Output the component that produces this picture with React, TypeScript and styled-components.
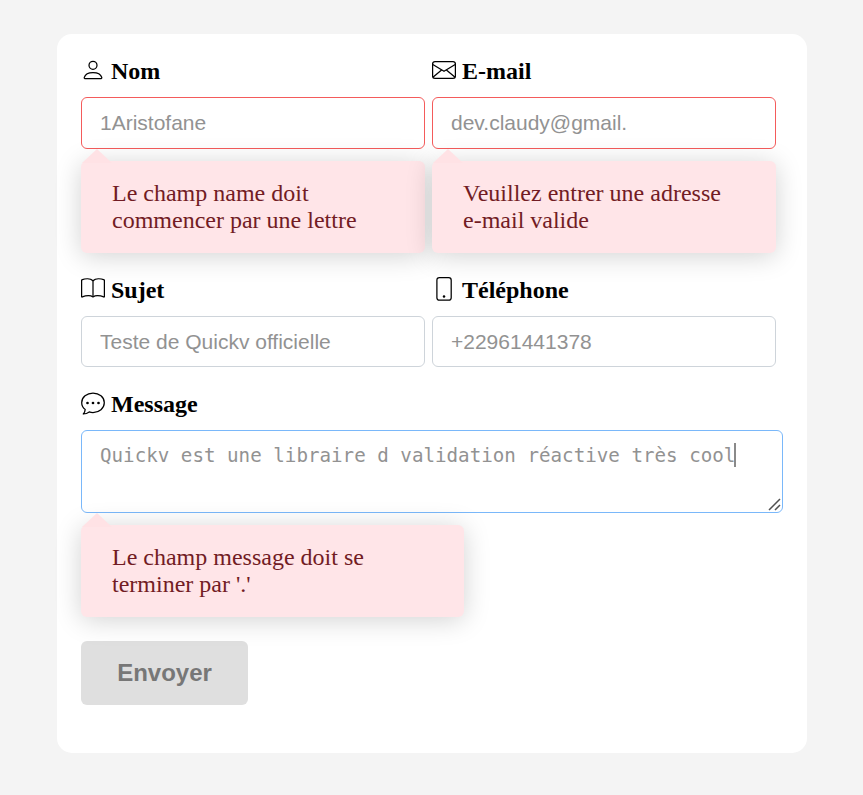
import React from 'react';
import styled, { createGlobalStyle } from 'styled-components';

const GlobalStyle = createGlobalStyle`
  * { box-sizing: border-box; }
  body {
    margin: 0;
    background: #f4f4f4;
    font-family: "Liberation Serif", "Times New Roman", serif;
    font-size: 24px;
    color: #000;
  }
`;

const Page = styled.main`
  min-height: 795px;
  padding: 34px 56px 42px 57px;
`;

const Card = styled.form`
  height: 719px;
  padding: 24px;
  border-radius: 15px;
  background: #fff;
`;

const Row = styled.div<{ $height: number }>`
  display: grid;
  grid-template-columns: 344px 344px;
  column-gap: 7px;
  height: ${({ $height }) => $height}px;
`;

const Field = styled.div`
  display: flex;
  flex-direction: column;
  align-items: flex-start;
`;

const Label = styled.label`
  display: flex;
  align-items: flex-start;
  gap: 6px;
  height: 39px;
  font-weight: 700;
  line-height: 27px;
`;

const Icon = styled.svg`
  width: 24px;
  height: 24px;
  flex: none;
  fill: none;
  stroke: #000;
  stroke-width: 1.25;
  stroke-linejoin: round;
`;

const Input = styled.input<{ $invalid?: boolean }>`
  width: 344px;
  height: ${({ $invalid }) => ($invalid ? 52 : 51)}px;
  padding: 0 18px;
  border: 1px solid ${({ $invalid }) => ($invalid ? '#f45b5b' : '#ced4da')};
  border-radius: 6px;
  outline: none;
  background: #fff;
  color: #929292;
  font: 21px "Liberation Sans", Arial, sans-serif;
`;

const TextBox = styled.div`
  position: relative;
  width: 702px;
  height: 83px;
  padding: 12px 18px;
  border: 1px solid #7ab8fa;
  border-radius: 6px;
  outline: none;
  background: #fff;
  color: #929292;
  font: 19.2px/25px "DejaVu Sans Mono", monospace;
  white-space: nowrap;
`;

const Caret = styled.span`
  display: inline-block;
  width: 2px;
  height: 24px;
  margin-left: -1px;
  background: #8a8a8a;
  vertical-align: top;
`;

const ResizeGrip = styled.svg`
  position: absolute;
  right: 0;
  bottom: 0;
  width: 14px;
  height: 14px;
`;

const Feedback = styled.div<{ $width?: number }>`
  position: relative;
  width: ${({ $width = 344 }) => $width}px;
  height: 92px;
  margin-top: 12px;
  padding: 19px 31px;
  border-radius: 6px;
  background: #ffe5e8;
  box-shadow: 0 3px 27px rgba(0, 0, 0, 0.18);
  color: #721c24;
  line-height: 27px;

  &::before {
    content: "";
    position: absolute;
    left: 1px;
    top: -12px;
    border: 15px solid transparent;
    border-top: 0;
    border-bottom: 14px solid #ffe2e5;
  }
`;

const SubmitButton = styled.button`
  display: block;
  width: 167px;
  height: 64px;
  margin-top: 24px;
  border: 0;
  border-radius: 6px;
  background: #dfdfdf;
  color: #777;
  font: 700 24px "Liberation Sans", Arial, sans-serif;
`;

const icons = {
  person: (
    <>
      <circle cx="12" cy="7.3" r="4" />
      <path d="M3.7 20.5c-.5 0-.6-.5-.4-1.2.8-2.7 4-4.7 8.7-4.7s7.900 2 8.700 4.700c.2.7.1 1.200-.4 1.200z" />
    </>
  ),
  envelope: (
    <>
      <rect x=".6" y="3.600" width="22.800" height="16.800" rx="2.400" />
      <path d="m.8 6.500 11.200 6.800 11.200-6.800M.9 19.300l8.700-7.300M23.100 19.300l-8.700-7.300" />
    </>
  ),
  book: (
    <>
      <path d="M12 3.400v16.200" />
      <path d="M.6 2.800v17.400M23.400 2.800v17.400" />
      <path d="M.6 2.900C4.300 1.400 9.400 1.200 12 3.700c2.600-2.500 7.700-2.300 11.400-.8M.6 20.100c3.700-1.300 8.700-2 11.400-.2 2.700-1.800 7.700-1.100 11.400.2" />
    </>
  ),
  phone: (
    <>
      <rect x="4.900" y=".7" width="14.300" height="22.500" rx="2.500" />
      <circle cx="12" cy="19.400" r="1.250" fill="#000" stroke="none" />
    </>
  ),
  chat: (
    <>
      <path d="M4.200 18.400C2 16.800.7 14.400.7 11.700.7 6.200 5.800 2 12 2s11.300 4.200 11.300 9.700-5.100 9.800-11.300 9.800c-1.300 0-2.600-.2-3.800-.6-1.700 1.300-3.600 2-5.900 2.100 1.200-1.300 1.800-2.700 1.900-4.600z" />
      <g fill="#000" stroke="none">
        <circle cx="6.500" cy="12" r="1.350" />
        <circle cx="12" cy="12" r="1.350" />
        <circle cx="17.500" cy="12" r="1.350" />
      </g>
    </>
  ),
};

function FieldLabel({ icon, text, id }: { icon: keyof typeof icons; text: string; id: string }) {
  return (
    <Label htmlFor={id}>
      <Icon viewBox="0 0 24 24" aria-hidden>{icons[icon]}</Icon>
      <span>{text}</span>
    </Label>
  );
}

export default function App() {
  return (
    <>
      <GlobalStyle />
      <Page>
        <Card onSubmit={(event) => event.preventDefault()}>
          <Row $height={219}>
            <Field>
              <FieldLabel icon="person" text="Nom" id="name" />
              <Input id="name" defaultValue="1Aristofane" $invalid />
              <Feedback>Le champ name doit<br />commencer par une lettre</Feedback>
            </Field>
            <Field>
              <FieldLabel icon="envelope" text="E-mail" id="email" />
              <Input id="email" defaultValue="dev.claudy@gmail." $invalid />
              <Feedback>Veuillez entrer une adresse<br />e-mail valide</Feedback>
            </Field>
          </Row>
          <Row $height={114}>
            <Field>
              <FieldLabel icon="book" text="Sujet" id="subject" />
              <Input id="subject" defaultValue="Teste de Quickv officielle" />
            </Field>
            <Field>
              <FieldLabel icon="phone" text="Téléphone" id="phone" />
              <Input id="phone" defaultValue="+22961441378" />
            </Field>
          </Row>
          <Field>
            <FieldLabel icon="chat" text="Message" id="message" />
            <TextBox id="message" role="textbox" aria-multiline="true" tabIndex={0}>
              Quickv est une libraire d validation réactive très cool
              <Caret />
              <ResizeGrip viewBox="0 0 14 14" fill="none" stroke="#505050" strokeWidth="1.5">
                <path d="M1 12 12 1M7 12l5-5" />
              </ResizeGrip>
            </TextBox>
            <Feedback $width={383}>Le champ message doit se<br />terminer par '.'</Feedback>
          </Field>
          <SubmitButton type="submit" disabled>Envoyer</SubmitButton>
        </Card>
      </Page>
    </>
  );
}
